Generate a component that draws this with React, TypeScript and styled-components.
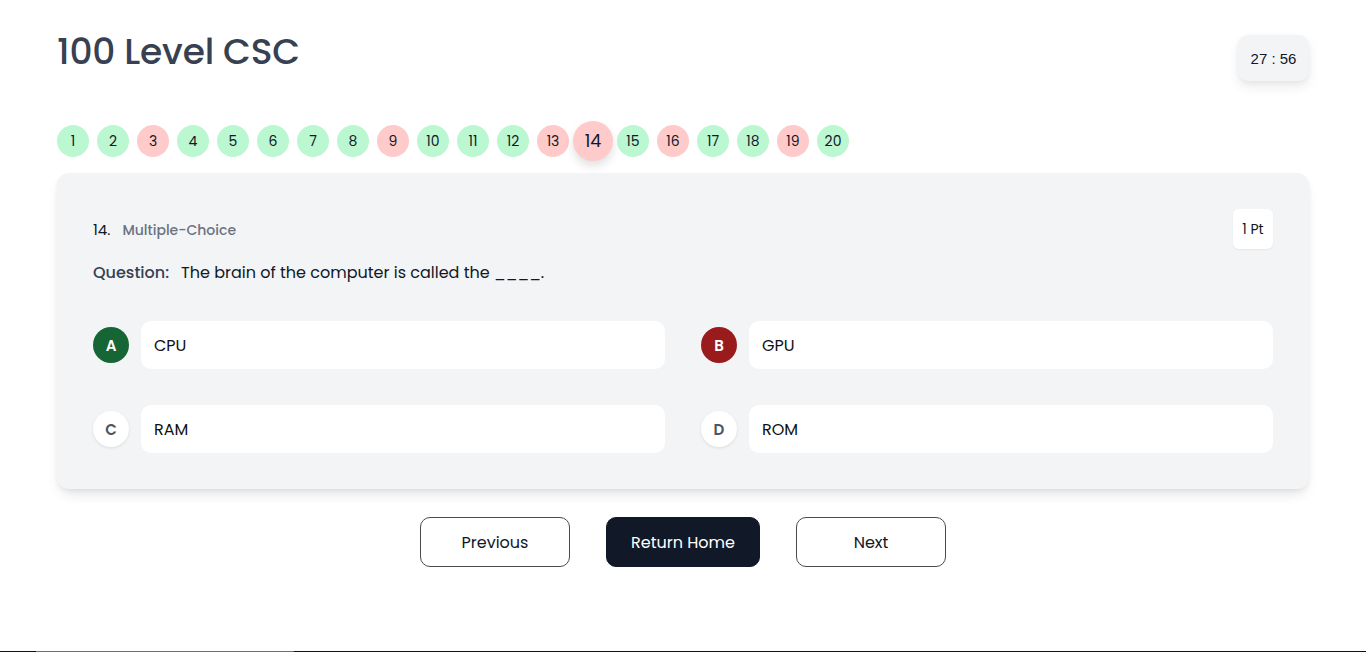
import React from "react";
import styled, { createGlobalStyle } from "styled-components";

const Global = createGlobalStyle`
  html, body { margin: 0; padding: 0; background: #ffffff; }
  body { font-family: "Poppins", "Inter", "Open Sans", sans-serif; color: #111827; }
  * { box-sizing: border-box; }
`;

const Page = styled.div`
  height: 651px;
  padding: 32px 57px 0;
  display: flex;
  flex-direction: column;
`;

const Header = styled.header`
  display: flex;
  justify-content: space-between;
  align-items: flex-start;
`;

const Title = styled.h1`
  margin: 0;
  font-size: 36px;
  line-height: 40px;
  font-weight: 500;
  color: #374151;
  letter-spacing: -0.2px;
`;

const Timer = styled.div`
  margin-top: 3px;
  width: 71px;
  height: 46px;
  display: flex;
  align-items: center;
  justify-content: center;
  background: #f3f4f6;
  border-radius: 10px;
  box-shadow: 0 6px 12px rgba(0, 0, 0, 0.08), 0 2px 4px rgba(0, 0, 0, 0.04);
  font-family: "Liberation Sans", Arial, sans-serif;
  font-size: 15px;
  color: #111827;
`;

const Bubbles = styled.nav`
  margin-top: 44px;
  display: flex;
  gap: 8px;
`;

const Bubble = styled.div<{ $state: "ok" | "bad"; $current?: boolean }>`
  width: 32px;
  height: 32px;
  border-radius: 50%;
  display: flex;
  align-items: center;
  justify-content: center;
  font-size: 14px;
  color: #111827;
  background: ${(p) => (p.$state === "ok" ? "#bbf7d0" : "#fecaca")};
  ${(p) =>
    p.$current
      ? `transform: scale(1.25); box-shadow: 0 4px 8px rgba(0,0,0,0.12);`
      : ""}
`;

const Card = styled.section`
  margin-top: 16px;
  background: #f3f4f6;
  border-radius: 12px;
  padding: 36px;
  box-shadow: 0 8px 14px -4px rgba(0, 0, 0, 0.12), 0 2px 4px rgba(0, 0, 0, 0.05);
`;

const CardHead = styled.div`
  display: flex;
  justify-content: space-between;
  align-items: center;
`;

const QNum = styled.div`
  display: flex;
  align-items: baseline;
  gap: 12px;
  font-size: 15px;
  color: #111827;
`;

const QType = styled.span`
  font-size: 14px;
  font-weight: 500;
  color: #6b7280;
`;

const Points = styled.div`
  width: 40px;
  height: 40px;
  background: #ffffff;
  border-radius: 6px;
  box-shadow: 0 1px 2px rgba(0, 0, 0, 0.06);
  display: flex;
  align-items: center;
  justify-content: center;
  font-size: 14px;
`;

const Question = styled.p`
  margin: 12px 0 0;
  font-size: 16px;
  line-height: 24px;
  color: #111827;
  display: flex;
  gap: 12px;
`;

const QLabel = styled.span`
  font-weight: 500;
  color: #374151;
`;

const Options = styled.div`
  margin-top: 36px;
  display: grid;
  grid-template-columns: 1fr 1fr;
  column-gap: 36px;
  row-gap: 36px;
`;

const Option = styled.div`
  display: flex;
  align-items: center;
  gap: 12px;
`;

const Letter = styled.div<{ $variant: "correct" | "wrong" | "none" }>`
  flex: none;
  width: 36px;
  height: 36px;
  border-radius: 50%;
  display: flex;
  align-items: center;
  justify-content: center;
  font-size: 15px;
  font-weight: 600;
  background: ${(p) =>
    p.$variant === "correct" ? "#166534" : p.$variant === "wrong" ? "#991b1b" : "#ffffff"};
  color: ${(p) => (p.$variant === "none" ? "#4b5563" : "#ffffff")};
  box-shadow: ${(p) => (p.$variant === "none" ? "0 1px 3px rgba(0,0,0,0.1)" : "none")};
`;

const OptionBox = styled.div`
  flex: 1;
  height: 48px;
  background: #ffffff;
  border-radius: 10px;
  padding: 0 13px;
  display: flex;
  align-items: center;
  font-size: 16px;
  color: #111111;
`;

const Actions = styled.div`
  margin-top: 28px;
  display: flex;
  justify-content: center;
  gap: 36px;
`;

const Button = styled.button<{ $primary?: boolean }>`
  height: 50px;
  width: ${(p) => (p.$primary ? "154px" : "150px")};
  border-radius: 10px;
  font-family: inherit;
  font-size: 16px;
  cursor: pointer;
  border: 1px solid ${(p) => (p.$primary ? "#111827" : "#4b4b4b")};
  background: ${(p) => (p.$primary ? "#111827" : "#ffffff")};
  color: ${(p) => (p.$primary ? "#ffffff" : "#111827")};
`;

const Footer = styled.div`
  height: 1px;
  display: flex;
  background: #111111;
`;

const FooterSeg = styled.div<{ $w: number }>`
  width: ${(p) => p.$w}px;
  background: #6e6e78;
  margin-left: 36px;
`;

const states: ("ok" | "bad")[] = [
  "ok", "ok", "bad", "ok", "ok", "ok", "ok", "ok", "bad", "ok",
  "ok", "ok", "bad", "bad", "ok", "bad", "ok", "ok", "bad", "ok",
];

const options: { l: string; t: string; v: "correct" | "wrong" | "none" }[] = [
  { l: "A", t: "CPU", v: "correct" },
  { l: "B", t: "GPU", v: "wrong" },
  { l: "C", t: "RAM", v: "none" },
  { l: "D", t: "ROM", v: "none" },
];

export default function App() {
  return (
    <>
      <Global />
      <Page>
        <Header>
          <Title>100 Level CSC</Title>
          <Timer>27 : 56</Timer>
        </Header>
        <Bubbles>
          {states.map((s, i) => (
            <Bubble key={i} $state={s} $current={i === 13}>
              {i + 1}
            </Bubble>
          ))}
        </Bubbles>
        <Card>
          <CardHead>
            <QNum>
              14.
              <QType>Multiple-Choice</QType>
            </QNum>
            <Points>1 Pt</Points>
          </CardHead>
          <Question>
            <QLabel>Question:</QLabel>
            <span>The brain of the computer is called the ____.</span>
          </Question>
          <Options>
            {options.map((o) => (
              <Option key={o.l}>
                <Letter $variant={o.v}>{o.l}</Letter>
                <OptionBox>{o.t}</OptionBox>
              </Option>
            ))}
          </Options>
        </Card>
        <Actions>
          <Button>Previous</Button>
          <Button $primary>Return Home</Button>
          <Button>Next</Button>
        </Actions>
      </Page>
      <Footer>
        <FooterSeg $w={258} />
      </Footer>
    </>
  );
}
